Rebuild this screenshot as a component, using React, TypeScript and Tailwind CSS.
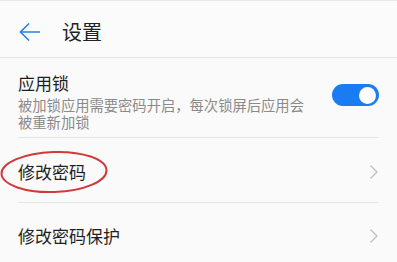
import React from "react";

const font = { fontFamily: '"Noto Sans CJK SC", "Noto Sans", sans-serif' };

function Chevron() {
  return (
    <svg width="10" height="16" viewBox="0 0 10 16" className="shrink-0">
      <path d="M1.5 1.5 L8 8 L1.5 14.5" fill="none" stroke="#bdbdbd" strokeWidth="1.3" />
    </svg>
  );
}

export default function App() {
  return (
    <div className="relative w-[397px] h-[262px] overflow-hidden bg-[#fafafa] text-[#1f1f1f]" style={font}>
      <div className="h-[58px] pt-[5px] flex items-center border-t border-[#e8e8e8] border-b border-b-[#e4e4e4] bg-[#fbfbfb]">
        <svg width="22" height="20" viewBox="0 0 22 20" className="ml-[19px]">
          <path d="M2 10 H21 M10 1.5 L1.5 10 L10 18.5" fill="none" stroke="#2b7fe0" strokeWidth="1.6" />
        </svg>
        <span className="ml-[21px] text-[20px] leading-none text-[#222]">设置</span>
      </div>

      <div className="mx-[18px] border-b border-[#e6e6e6] pt-[14px] pb-[7px] flex items-center">
        <div className="flex-1">
          <div className="text-[17px] leading-[22px] text-[#1f1f1f]">应用锁</div>
          <div className="mt-[2px] w-[292px] text-[14.3px] leading-[17px] text-[#8a8a8a]">
            被加锁应用需要密码开启，每次锁屏后应用会被重新加锁
          </div>
        </div>
        <div className="w-[47px] h-[22px] rounded-full bg-[#1a7cf2] flex items-center justify-end pr-[3px] mb-[12px]">
          <div className="w-[17px] h-[17px] rounded-full bg-white" />
        </div>
      </div>

      <div className="mx-[18px] h-[65px] pt-[3px] border-b border-[#e6e6e6] flex items-center justify-between">
        <span className="text-[17px] leading-[22px]">修改密码</span>
        <Chevron />
      </div>

      <div className="mx-[18px] h-[65px] flex items-center justify-between">
        <span className="text-[17px] leading-[22px]">修改密码保护</span>
        <Chevron />
      </div>

      <svg className="absolute left-0 top-[149px]" width="112" height="46" viewBox="0 0 112 46">
        <ellipse cx="54" cy="23" rx="52.5" ry="20" fill="none" stroke="#d23a3a" strokeWidth="2" transform="rotate(-2 54 23)" />
      </svg>
    </div>
  );
}
